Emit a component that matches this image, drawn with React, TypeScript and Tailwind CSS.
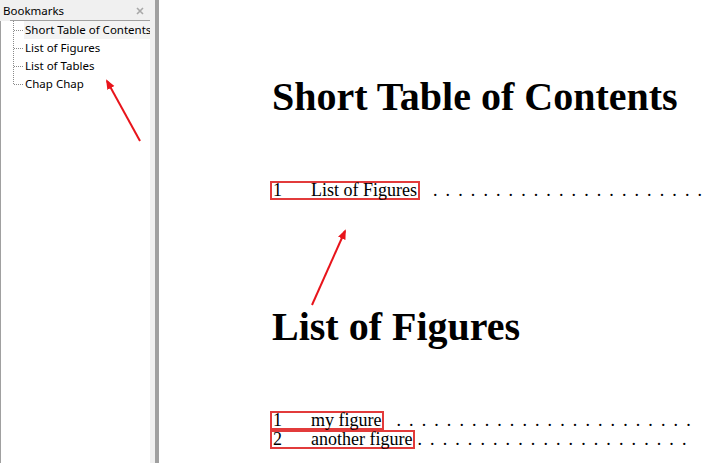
const bookmarks = [
  "Short Table of Contents",
  "List of Figures",
  "List of Tables",
  "Chap Chap",
];

function TreeBranch({ last }: { last: boolean }) {
  return (
    <svg width="14" height="18" className="shrink-0">
      <line
        x1="3.5"
        y1="0"
        x2="3.5"
        y2={last ? 9 : 18}
        stroke="#8a8a8a"
        strokeDasharray="1 1"
      />
      <line x1="4" y1="9.5" x2="13" y2="9.5" stroke="#8a8a8a" strokeDasharray="1 1" />
    </svg>
  );
}

function Dots({ count }: { count: number }) {
  return (
    <span className="flex">
      {Array.from({ length: count }).map((_, i) => (
        <span key={i} className="w-[12.6px] shrink-0">
          .
        </span>
      ))}
    </span>
  );
}

function TocEntry({
  num,
  title,
  gap,
  dots,
}: {
  num: string;
  title: string;
  gap: number;
  dots: number;
}) {
  return (
    <div className="flex items-baseline h-[19px] leading-[15px] whitespace-nowrap">
      <span className="border-2 border-[#e23b3b] px-[1px] flex items-baseline">
        <span className="w-[38px]">{num}</span>
        <span>{title}</span>
      </span>
      <span style={{ width: gap }} className="shrink-0" />
      <Dots count={dots} />
    </div>
  );
}

export default function App() {
  return (
    <div className="relative w-[706px] h-[463px] flex overflow-hidden bg-white">
      {/* bookmarks panel */}
      <aside className="w-[150px] shrink-0 flex flex-col bg-white font-['Noto_Sans',sans-serif] text-[11.5px] text-black">
        <div className="h-[21px] bg-[#f0f0f0] relative flex items-center pl-[3px] pr-[6px]">
          <span className="flex-1 leading-none">Bookmarks</span>
          <svg width="8" height="8">
            <path d="M1 1 L7 7 M7 1 L1 7" stroke="#a8a8a8" strokeWidth="1.6" />
          </svg>
          <div className="absolute left-[10px] right-0 bottom-0 h-px bg-[#a0a0a0]" />
        </div>
        <div className="flex-1 border-l border-[#a0a0a0] pl-[9px]">
          {bookmarks.map((b, i) => (
            <div key={b} className="flex items-center h-[18px]">
              <TreeBranch last={i === bookmarks.length - 1} />
              <span
                className={
                  "flex-1 h-full flex items-center pl-[1px] whitespace-nowrap " +
                  (i === 0 ? "bg-[#f3f3f3]" : "")
                }
              >
                {b}
              </span>
            </div>
          ))}
        </div>
      </aside>
      <div className="w-[5px] shrink-0 bg-[#f0f0f0]" />
      <div className="w-[4px] shrink-0 bg-[#a0a0a0]" />

      {/* document page */}
      <main className="flex-1 pl-[111px] font-['Liberation_Serif',serif] text-black overflow-hidden">
        <h1 className="mt-[77px] pl-[2px] text-[40px] font-bold leading-[39px] whitespace-nowrap">
          Short Table of Contents
        </h1>
        <div className="mt-[65px] text-[18px]">
          <TocEntry num="1" title="List of Figures" gap={13} dots={22} />
        </div>
        <h1 className="mt-[107px] pl-[2px] text-[40px] font-bold leading-[39px] whitespace-nowrap">
          List of Figures
        </h1>
        <div className="mt-[65px] text-[18px]">
          <TocEntry num="1" title="my figure" gap={12} dots={24} />
          <TocEntry num="2" title="another figure" gap={2} dots={22} />
        </div>
      </main>

      {/* annotation arrows */}
      <svg
        className="absolute inset-0 pointer-events-none"
        width="706"
        height="463"
      >
        <defs>
          <marker
            id="head"
            markerWidth="10"
            markerHeight="10"
            refX="8"
            refY="5"
            orient="auto"
            markerUnits="userSpaceOnUse"
          >
            <path d="M0 1 L10 5 L0 9 Z" fill="#e8141b" />
          </marker>
        </defs>
        <line x1="140" y1="141" x2="107" y2="81" stroke="#e8141b" strokeWidth="2" markerEnd="url(#head)" />
        <line x1="312" y1="305" x2="345" y2="231" stroke="#e8141b" strokeWidth="2" markerEnd="url(#head)" />
      </svg>
    </div>
  );
}
